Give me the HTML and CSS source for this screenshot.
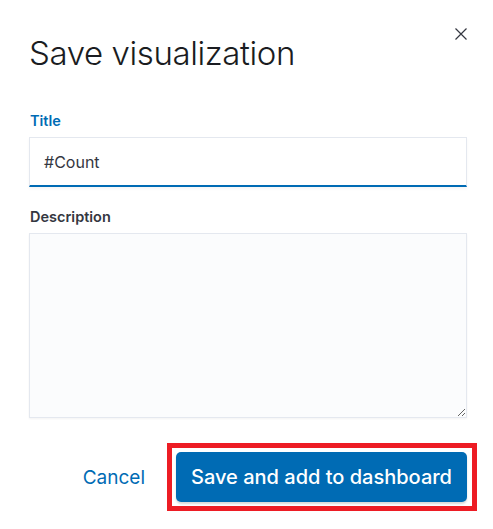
FILE: index.html
```html
<!DOCTYPE html>
<html>
<head>
<meta charset="utf-8">
<link rel="stylesheet" href="styles.css">
</head>
<body>
<div class="modal">
  <button class="close" aria-label="Close">
    <svg width="12" height="12" viewBox="0 0 12 12"><path d="M0.5 0.5 L11.5 11.5 M11.5 0.5 L0.5 11.5" stroke="#343741" stroke-width="1.2" fill="none"/></svg>
  </button>
  <h1 class="title">Save visualization</h1>
  <div class="field field-title">
    <label class="label label-active">Title</label>
    <div class="input" role="textbox">#Count</div>
  </div>
  <div class="field field-desc">
    <label class="label">Description</label>
    <textarea class="textarea"></textarea>
  </div>
  <div class="footer">
    <button class="cancel">Cancel</button>
    <div class="highlight">
      <button class="primary">Save and add to dashboard</button>
    </div>
  </div>
</div>
</body>
</html>
```

FILE: styles.css
```css
* { box-sizing: border-box; }
html, body { margin: 0; padding: 0; background: #fff; }
body { font-family: Inter, "Noto Sans", sans-serif; color: #343741; }
.modal { position: relative; width: 493px; height: 529px; padding: 0 26px 0 29px; }
.close { position: absolute; top: 28px; left: 455px; width: 12px; height: 12px; padding: 0; border: 0; background: none; display: block; }
.close svg { display: block; }
.title { margin: 0; padding-top: 33px; font-size: 33px; line-height: 40px; font-weight: 300; color: #1a1c21; letter-spacing: -0.4px; }
.field { display: flex; flex-direction: column; }
.field-title { margin-top: 39px; }
.field-desc { margin-top: 21px; }
.label { font-size: 14.5px; font-weight: 600; line-height: 18px; color: #343741; margin-bottom: 7px; padding-left: 1px; }
.label-active { color: #006bb4; }
.input { display: flex; align-items: center; width: 438px; height: 50px; border: 1px solid #e4e8ef; border-bottom: 2px solid #006bb4; background: #fff; font-size: 16px; color: #343741; padding-left: 14px; box-shadow: 0 2px 3px rgba(0,0,0,0.04); }
.textarea { width: 438px; height: 185px; border: 1px solid #e4e8ef; background: #fbfcfd; resize: vertical; font-family: inherit; outline: none; box-shadow: 0 1px 2px rgba(0,0,0,0.05); display: block; }
.footer { display: flex; justify-content: flex-end; align-items: center; margin-top: 25px; margin-right: -10px; }
.cancel { border: 0; background: none; font-family: inherit; font-size: 19px; color: #006bb4; padding: 0; margin-right: 22px; }
.highlight { border: 5px solid #ed1c24; padding: 4px 5px 4px 4px; }
.primary { display: block; width: 291px; height: 50px; border: 0; border-radius: 5px; background: #006bb4; color: #fff; font-family: inherit; font-size: 20px; font-weight: 500; box-shadow: 0 2px 2px rgba(0,0,0,0.15); }
```
